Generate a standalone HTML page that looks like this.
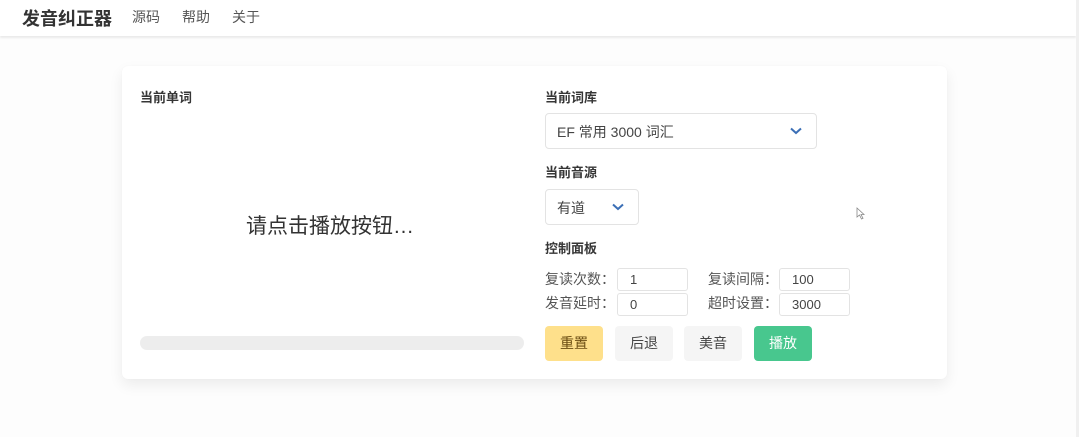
<!DOCTYPE html>
<html><head><meta charset="utf-8"><style>
*{box-sizing:border-box;margin:0;padding:0}
body{width:1079px;height:437px;background:#fdfdfd;font-family:"Liberation Sans","Noto Sans CJK SC",sans-serif;color:#363636;position:relative;overflow:hidden}
.hdr{position:absolute;left:0;top:0;width:1076px;height:36px;background:#fff;box-shadow:0 2px 2px rgba(0,0,0,.08)}
.sb{position:absolute;left:1076px;top:0;width:3px;height:437px;background:#f0f0f0}
.t{position:absolute;white-space:nowrap}
.card{position:absolute;left:122px;top:66px;width:825px;height:313px;background:#fff;border-radius:6px;box-shadow:0 6px 14px rgba(0,0,0,.07),0 0 1px rgba(0,0,0,.05)}
.box{position:absolute;background:#fff;border:1px solid #e3e3e3;border-radius:4px}
.h{font-size:13px;font-weight:bold;color:#363636}
.btn{position:absolute;top:326px;width:58px;height:35px;border-radius:4px;font-size:14px;text-align:center;line-height:35px}
.lbl{font-size:14px;color:#555}
.in{position:absolute;height:23px;width:71px;border:1px solid #e3e3e3;border-radius:3px;font-size:13px;padding-left:12px;line-height:22px;color:#444;background:#fff}
</style></head><body>
<div class="hdr"></div><div class="sb"></div>
<div class="t" style="left:22px;top:5px;font-size:18px;font-weight:bold;color:#333">发音纠正器</div>
<div class="t" style="left:132px;top:7px;font-size:14px;color:#555">源码</div>
<div class="t" style="left:182px;top:7px;font-size:14px;color:#555">帮助</div>
<div class="t" style="left:232px;top:7px;font-size:14px;color:#555">关于</div>
<div class="card"></div>
<div class="t h" style="left:140px;top:87px">当前单词</div>
<div class="t" style="left:246px;top:210px;font-size:21px;color:#333">请点击播放按钮…</div>
<div style="position:absolute;left:140px;top:336px;width:384px;height:14px;border-radius:7px;background:#ededed"></div>
<div class="t h" style="left:545px;top:87px">当前词库</div>
<div class="box" style="left:545px;top:113px;width:272px;height:36px"></div>
<div class="t" style="left:557px;top:122px;font-size:14px;color:#444">EF 常用 3000 词汇</div>
<svg style="position:absolute;left:790px;top:127px" width="12" height="8"><path d="M1 1.5L6 6L11 1.5" stroke="#3b6fb6" stroke-width="2" fill="none"/></svg>
<div class="t h" style="left:545px;top:162px">当前音源</div>
<div class="box" style="left:545px;top:189px;width:94px;height:36px"></div>
<div class="t" style="left:557px;top:198px;font-size:14px;color:#444">有道</div>
<svg style="position:absolute;left:612px;top:203px" width="12" height="8"><path d="M1 1.5L6 6L11 1.5" stroke="#3b6fb6" stroke-width="2" fill="none"/></svg>
<div class="t h" style="left:545px;top:238px">控制面板</div>
<div class="t lbl" style="left:545px;top:269px">复读次数：</div>
<div class="t lbl" style="left:545px;top:293px">发音延时：</div>
<div class="t lbl" style="left:708px;top:269px">复读间隔：</div>
<div class="t lbl" style="left:708px;top:293px">超时设置：</div>
<div class="in" style="left:617px;top:268px">1</div>
<div class="in" style="left:617px;top:293px">0</div>
<div class="in" style="left:779px;top:268px">100</div>
<div class="in" style="left:779px;top:293px">3000</div>
<div class="btn" style="left:545px;background:#fee08b;color:#6b4d12">重置</div>
<div class="btn" style="left:615px;background:#f5f5f5;color:#444">后退</div>
<div class="btn" style="left:684px;background:#f5f5f5;color:#444">美音</div>
<div class="btn" style="left:754px;background:#48c78e;color:#fff">播放</div>
<svg style="position:absolute;left:856px;top:207px" width="9" height="13"><path d="M1 1V10L3.5 8L5.5 12L7 11.3L5 7.5H8Z" fill="#fff" stroke="#888" stroke-width="0.8"/></svg>
</body></html>
